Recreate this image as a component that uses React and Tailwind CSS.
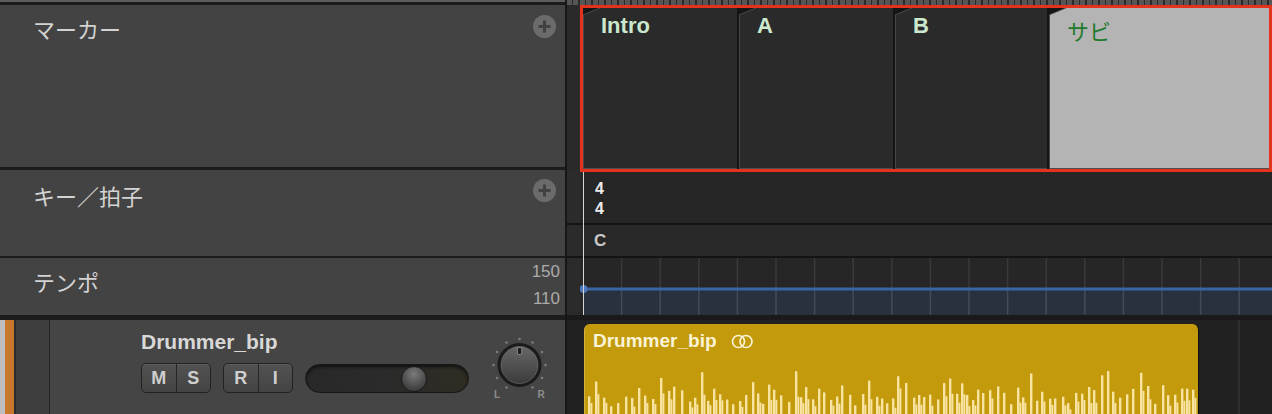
import React from "react";

function rng(seed) {
  let s = seed;
  return () => {
    s = (s * 1103515245 + 12345) & 0x7fffffff;
    return s / 0x7fffffff;
  };
}

const BARS = (() => {
  const r = rng(4242);
  const out = [];
  let x = 3;
  while (x < 612) {
    const roll = r();
    const f = 0.85 + (0.25 * x) / 615;
    let h;
    if (roll < 0.1) h = 34 + r() * 14;
    else if (roll < 0.5) h = 20 + r() * 12;
    else h = 9 + r() * 12;
    h *= f;
    out.push({ x, h, w: 2.4 });
    if (r() < 0.6) {
      out.push({ x: x + 2.4, h: h * (0.4 + r() * 0.3), w: 2 });
    }
    x += 5 + Math.floor(r() * 4);
  }
  return out;
})();

const GRID = Array.from({ length: 18 }, (_, k) => 3 + (k + 1) * 38.6);

function Plus() {
  return (
    <div className="w-[23px] h-[23px] rounded-full bg-[#6b6b6b] flex items-center justify-center">
      <svg width="13" height="13" viewBox="0 0 13 13">
        <rect x="5" y="0.5" width="3" height="12" fill="#414141" />
        <rect x="0.5" y="5" width="12" height="3" fill="#414141" />
      </svg>
    </div>
  );
}

const jp = "font-['Noto_Sans_CJK_JP','Noto_Sans',sans-serif]";

function Marker({ label, light, first, jpText }) {
  return (
    <div
      className={`relative h-full ${
        light ? "bg-[#b4b4b4] flex-1" : "bg-[#2a2a2a]"
      } ${first ? "" : "border-l-2 border-[#141414]"} shadow-[inset_1px_0_0_#474747,inset_0_-1px_0_#4d4d4d]`}
    >
      <svg className="absolute left-0 top-0" width="18" height="8" viewBox="0 0 18 8">
        <polygon points="0,0 17,0 0,7" fill="#161616" />
        <line x1="0" y1="7" x2="17" y2="0" stroke="#555" strokeWidth="0.8" />
      </svg>
      {jpText ? (
        <div className={`pl-[18px] pt-[9px] text-[22px] leading-[26px] text-[#1f7b2e] ${jp}`}>
          {label}
        </div>
      ) : (
        <div className="pl-[18px] pt-[6px] text-[22px] leading-[24px] font-bold text-[#cbe8cf]">
          {label}
        </div>
      )}
    </div>
  );
}

function Knob() {
  const dots = [];
  for (let i = -5; i <= 5; i++) {
    const a = (i * 30 * Math.PI) / 180;
    dots.push(
      <circle key={i} cx={30.5 + 26 * Math.sin(a)} cy={30 - 26 * Math.cos(a)} r="1.3" fill="#7c7c7c" />
    );
  }
  return (
    <svg width="61" height="64" viewBox="0 0 61 64">
      <defs>
        <linearGradient id="kg" x1="0" y1="0" x2="0" y2="1">
          <stop offset="0" stopColor="#676767" />
          <stop offset="1" stopColor="#3b3b3b" />
        </linearGradient>
      </defs>
      {dots}
      <circle cx="30.5" cy="30" r="22" fill="#1b1b1b" />
      <circle cx="30.5" cy="30" r="18.5" fill="url(#kg)" />
      <circle cx="30.5" cy="30" r="18.5" fill="none" stroke="#777" strokeWidth="0.6" />
      <rect x="28.3" y="12.5" width="4.5" height="7" rx="1.5" fill="#1e1e1e" stroke="#9a9a9a" strokeWidth="0.8" />
      <text x="8" y="63" fontSize="10" fontWeight="bold" fill="#8d8d8d" textAnchor="middle" fontFamily="Liberation Sans, Arial, sans-serif">L</text>
      <text x="52" y="63" fontSize="10" fontWeight="bold" fill="#8d8d8d" textAnchor="middle" fontFamily="Liberation Sans, Arial, sans-serif">R</text>
    </svg>
  );
}

function BtnPair({ a, b }) {
  return (
    <div className="flex h-[30px] w-[70px] rounded-[5px] border border-[#222] bg-gradient-to-b from-[#525252] to-[#444] shadow-[inset_0_1px_0_#5e5e5e] overflow-hidden">
      <div className="flex-1 flex items-center justify-center text-[18px] font-bold text-[#cfcfcf] border-r border-[#262626]">
        {a}
      </div>
      <div className="flex-1 flex items-center justify-center text-[18px] font-bold text-[#cfcfcf]">
        {b}
      </div>
    </div>
  );
}

function LeftColumn() {
  return (
    <div className="w-[567px] shrink-0 flex flex-col border-r-2 border-[#171717]">
      <div className="h-[2px] bg-[#5c5c5c]" />
      <div className="h-[3px] bg-[#1c1c1c]" />
      <div className="h-[162px] bg-[#434343] flex justify-between items-start pl-[33px] pr-[9px]">
        <span className={`pt-[10px] text-[22px] leading-[26px] text-[#d3d3d3] ${jp}`}>マーカー</span>
        <div className="pt-[10px]">
          <Plus />
        </div>
      </div>
      <div className="h-[3px] bg-[#1c1c1c]" />
      <div className="h-[86px] bg-[#434343] flex justify-between items-start pl-[33px] pr-[9px]">
        <span className={`pt-[12px] text-[22px] leading-[26px] text-[#d3d3d3] ${jp}`}>キー／拍子</span>
        <div className="pt-[9px]">
          <Plus />
        </div>
      </div>
      <div className="h-[2px] bg-[#1c1c1c]" />
      <div className="h-[57px] bg-[#434343] flex justify-between items-start pl-[33px] pr-[5px]">
        <span className={`pt-[10px] text-[22px] leading-[26px] text-[#d3d3d3] ${jp}`}>テンポ</span>
        <div className="flex flex-col items-end text-[17px] leading-[27px] text-[#ababab]">
          <span>150</span>
          <span>110</span>
        </div>
      </div>
      <div className="h-[5px] bg-[#1c1c1c]" />
      <div className="flex-1 flex bg-[#454545]">
        <div className="w-[5px] bg-[#bdbdbd]" />
        <div className="w-[9px] bg-[#c7782b]" />
        <div className="w-[2px] bg-[#2c2c2c]" />
        <div className="w-[34px] bg-[#3e3e3e] border-r border-[#262626]" />
        <div className="flex items-start">
          <div className="ml-[91px] flex flex-col">
            <div className="pt-[10px] text-[21px] leading-[23px] font-bold text-[#d8d8d8]">
              Drummer_bip
            </div>
            <div className="mt-[10px] flex items-center">
              <BtnPair a="M" b="S" />
              <div className="ml-[12px]">
                <BtnPair a="R" b="I" />
              </div>
              <div className="ml-[12px] relative w-[164px] h-[29px] rounded-full border border-[#171717] bg-gradient-to-r from-[#282828] via-[#2b2b2b] to-[#2f2c22] shadow-[inset_0_2px_3px_#111]">
                <div className="absolute left-[95px] top-[1px] w-[26px] h-[26px] rounded-full border border-[#1a1a1a] bg-[radial-gradient(circle_at_50%_30%,#7a7a7a,#4a4a4a_60%,#333)]" />
              </div>
            </div>
          </div>
          <div className="ml-[20px] mt-[15px]">
            <Knob />
          </div>
        </div>
      </div>
    </div>
  );
}

function RightColumn() {
  return (
    <div className="flex-1 flex flex-col relative">
      <div className="h-[5px] bg-[repeating-linear-gradient(90deg,#565656_0px,#565656_5px,#2a2a2a_5px,#2a2a2a_6.5px)]" />
      <div className="h-[167px] flex">
        <div className="w-[13px] bg-[#2a2a2a]" />
        <div className="flex-1 border-[3px] border-[#e3331c] flex bg-[#2a2a2a]">
          <div className="w-[154px]">
            <Marker label="Intro" first />
          </div>
          <div className="w-[156px]">
            <Marker label="A" />
          </div>
          <div className="w-[154px]">
            <Marker label="B" />
          </div>
          <Marker label="サビ" light jpText />
        </div>
      </div>
      <div className="h-[51px] flex">
        <div className="w-[13px] bg-[#2b2b2b]" />
        <div className="flex-1 bg-[#262626] pl-[15px] pt-[7px] flex flex-col text-[16px] leading-[20px] font-bold text-[#ececec]">
          <span>4</span>
          <span>4</span>
        </div>
      </div>
      <div className="h-[2px] bg-[#141414]" />
      <div className="h-[31px] flex">
        <div className="w-[13px] bg-[#2b2b2b]" />
        <div className="flex-1 bg-[#282828] pl-[14px] flex items-center text-[17px] font-bold text-[#c9c9c9]">
          C
        </div>
      </div>
      <div className="h-[2px] bg-[#141414]" />
      <div className="h-[57px] flex">
        <div className="w-[13px] bg-[#2b2b2b]" />
        <div className="flex-1 bg-[#262626]">
          <svg width="692" height="57" viewBox="0 0 692 57" className="block">
            <rect x="3" y="32" width="689" height="25" fill="#28313d" />
            {GRID.map((gx) => (
              <g key={gx}>
                <line x1={gx} y1="0" x2={gx} y2="31" stroke="#3a3a3a" strokeWidth="1.5" />
                <line x1={gx} y1="32" x2={gx} y2="57" stroke="#424c58" strokeWidth="1.5" />
              </g>
            ))}
            <line x1="3" y1="31" x2="692" y2="31" stroke="#3a67a3" strokeWidth="3" />
            <circle cx="3.5" cy="31" r="4" fill="#4a78b8" />
          </svg>
        </div>
      </div>
      <div className="h-[5px] bg-[#1a1a1a]" />
      <div className="flex-1 flex bg-[#212121]">
        <div className="w-[17px] shrink-0" />
        <div className="mt-[4px] w-[615px] shrink-0 relative rounded-t-[6px] bg-[#c29a0c] overflow-hidden border-l border-[#d6b13a] border-r border-r-[#111]">
          <div className="pl-[8px] pt-[7px] flex items-center">
            <span className="text-[19px] leading-[20px] font-bold text-[#fbf3d6]">Drummer_bip</span>
            <svg className="ml-[14px]" width="23" height="15" viewBox="0 0 23 15">
              <circle cx="7.5" cy="7.5" r="6" fill="none" stroke="#fbf3d6" strokeWidth="1.7" />
              <circle cx="15" cy="7.5" r="6" fill="none" stroke="#fbf3d6" strokeWidth="1.7" />
            </svg>
          </div>
          <svg className="absolute left-0 bottom-0" width="615" height="56" viewBox="0 0 615 56">
            {BARS.map((b, i) => (
              <rect key={i} x={b.x} y={56 - b.h} width={b.w} height={b.h} fill="#f8e3a0" />
            ))}
          </svg>
        </div>
        <div className="ml-[39px] w-[2px] bg-[#2f2f2f]" />
      </div>
      <div className="absolute left-[16px] top-[172px] w-[1px] h-[143px] bg-[#d6d6d6]" />
    </div>
  );
}

export default function App() {
  return (
    <div className="w-[1272px] h-[414px] overflow-hidden flex bg-[#222] font-['Liberation_Sans',Arial,sans-serif]">
      <LeftColumn />
      <RightColumn />
    </div>
  );
}
